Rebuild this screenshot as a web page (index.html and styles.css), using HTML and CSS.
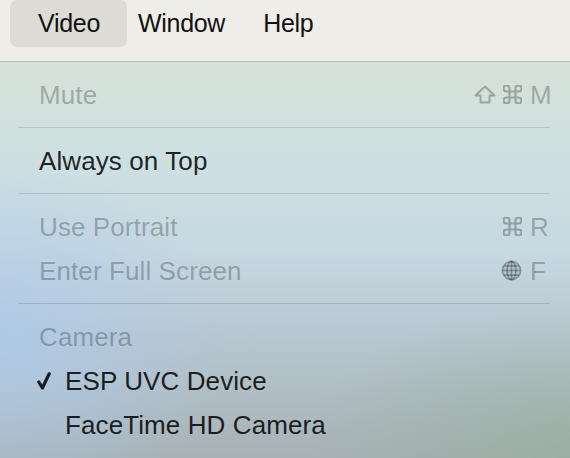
FILE: index.html
```html
<!DOCTYPE html>
<html>
<head>
<meta charset="utf-8">
<link rel="stylesheet" href="styles.css">
</head>
<body>
<div class="screen">
  <div class="menubar">
    <div class="title active">Video</div>
    <div class="title">Window</div>
    <div class="title">Help</div>
  </div>
  <div class="menu">
    <div class="item disabled">
      <span class="label">Mute</span>
      <span class="mods">
        <svg class="shift" width="22" height="19" viewBox="0 0 22 19"><path d="M11 1.5 L20.5 10.5 H15.5 V17.5 H6.5 V10.5 H1.5 Z" fill="none" stroke="currentColor" stroke-width="2" stroke-linejoin="round"/></svg>
        <svg class="cmd" width="19" height="19" viewBox="2.5 2.5 19 19"><path d="M15 6v12a3 3 0 1 0 3-3H6a3 3 0 1 0 3 3V6a3 3 0 1 0-3 3h12a3 3 0 1 0-3-3" fill="none" stroke="currentColor" stroke-width="2.2" stroke-linecap="round" stroke-linejoin="round"/></svg>
      </span>
      <span class="key">M</span>
    </div>
    <div class="sep"></div>
    <div class="item">
      <span class="label">Always on Top</span>
    </div>
    <div class="sep"></div>
    <div class="item disabled">
      <span class="label">Use Portrait</span>
      <span class="mods">
        <svg class="cmd" width="19" height="19" viewBox="2.5 2.5 19 19"><path d="M15 6v12a3 3 0 1 0 3-3H6a3 3 0 1 0 3 3V6a3 3 0 1 0-3 3h12a3 3 0 1 0-3-3" fill="none" stroke="currentColor" stroke-width="2.2" stroke-linecap="round" stroke-linejoin="round"/></svg>
      </span>
      <span class="key">R</span>
    </div>
    <div class="item disabled">
      <span class="label">Enter Full Screen</span>
      <span class="mods">
        <svg class="globe" width="21" height="21" viewBox="0 0 22 22" fill="none" stroke="currentColor" stroke-width="1.7">
          <circle cx="11" cy="11" r="9.6" fill="currentColor" fill-opacity="0.3"/>
          <ellipse cx="11" cy="11" rx="4.6" ry="9.6"/>
          <line x1="11" y1="1.4" x2="11" y2="20.6"/>
          <line x1="1.4" y1="11" x2="20.6" y2="11"/>
          <path d="M3 6.2 H19 M3 15.8 H19"/>
        </svg>
      </span>
      <span class="key">F</span>
    </div>
    <div class="sep"></div>
    <div class="item disabled">
      <span class="label">Camera</span>
    </div>
    <div class="item">
      <span class="check"><svg width="14" height="18" viewBox="0 0 14 18"><polyline points="1.8,10 5.4,16 12.2,1.8" fill="none" stroke="currentColor" stroke-width="3.2" stroke-linecap="round" stroke-linejoin="round"/></svg></span>
      <span class="label">ESP UVC Device</span>
    </div>
    <div class="item indent">
      <span class="label">FaceTime HD Camera</span>
    </div>
  </div>
</div>
</body>
</html>
```

FILE: styles.css
```css
html, body {
  margin: 0;
  padding: 0;
}

body {
  width: 570px;
  height: 458px;
  overflow: hidden;
  font-family: "Liberation Sans", Arial, sans-serif;
  color: rgba(0, 0, 0, 0.86);
}

.screen {
  height: 458px;
  display: flex;
  flex-direction: column;
}

.menubar {
  height: 61px;
  flex: 0 0 auto;
  display: flex;
  align-items: flex-start;
  padding-left: 19px;
  background: #efede8;
  border-bottom: 1px solid #bcbbb6;
}

.title {
  position: relative;
  isolation: isolate;
  height: 47px;
  line-height: 47px;
  padding: 0 19px;
  font-size: 25px;
  letter-spacing: -0.3px;
  color: #111;
}

.title.active::before {
  content: "";
  position: absolute;
  top: 0;
  bottom: 0;
  left: -9px;
  right: -8px;
  border-radius: 7px;
  background: #dcdbd5;
  z-index: -1;
}

.menu {
  flex: 1 1 auto;
  padding-top: 10px;
  background:
    radial-gradient(ellipse 300px 240px at 0% 70%, rgba(174, 203, 236, 0.8), rgba(174, 203, 236, 0) 75%),
    radial-gradient(ellipse 340px 190px at 100% 100%, rgba(150, 172, 152, 0.65), rgba(150, 172, 152, 0) 80%),
    linear-gradient(180deg, #d6e2d9 0%, #cddfe2 28%, #c6d8e1 48%, #b7c6d0 70%, #a7b2b6 100%);
}

.item {
  height: 44px;
  display: flex;
  align-items: center;
  padding: 0 18px 0 39px;
  font-size: 26px;
  line-height: 44px;
}

.item .label {
  padding-top: 1px;
  white-space: nowrap;
  letter-spacing: 0.1px;
}

.item.indent {
  padding-left: 65px;
}

.item.disabled {
  color: rgba(0, 0, 0, 0.27);
}

.check {
  width: 28px;
  margin-left: -2px;
  display: flex;
  align-items: center;
}

.check svg {
  display: block;
  margin-top: 1px;
}

.mods {
  margin-left: auto;
  display: flex;
  align-items: center;
  gap: 7px;
  margin-right: 8px;
}

.mods svg {
  display: block;
}

.key {
  width: 22px;
  padding-top: 1px;
}

.sep {
  height: 1px;
  margin: 11px 20px 10px 18px;
  background: rgba(0, 0, 0, 0.12);
}
```
